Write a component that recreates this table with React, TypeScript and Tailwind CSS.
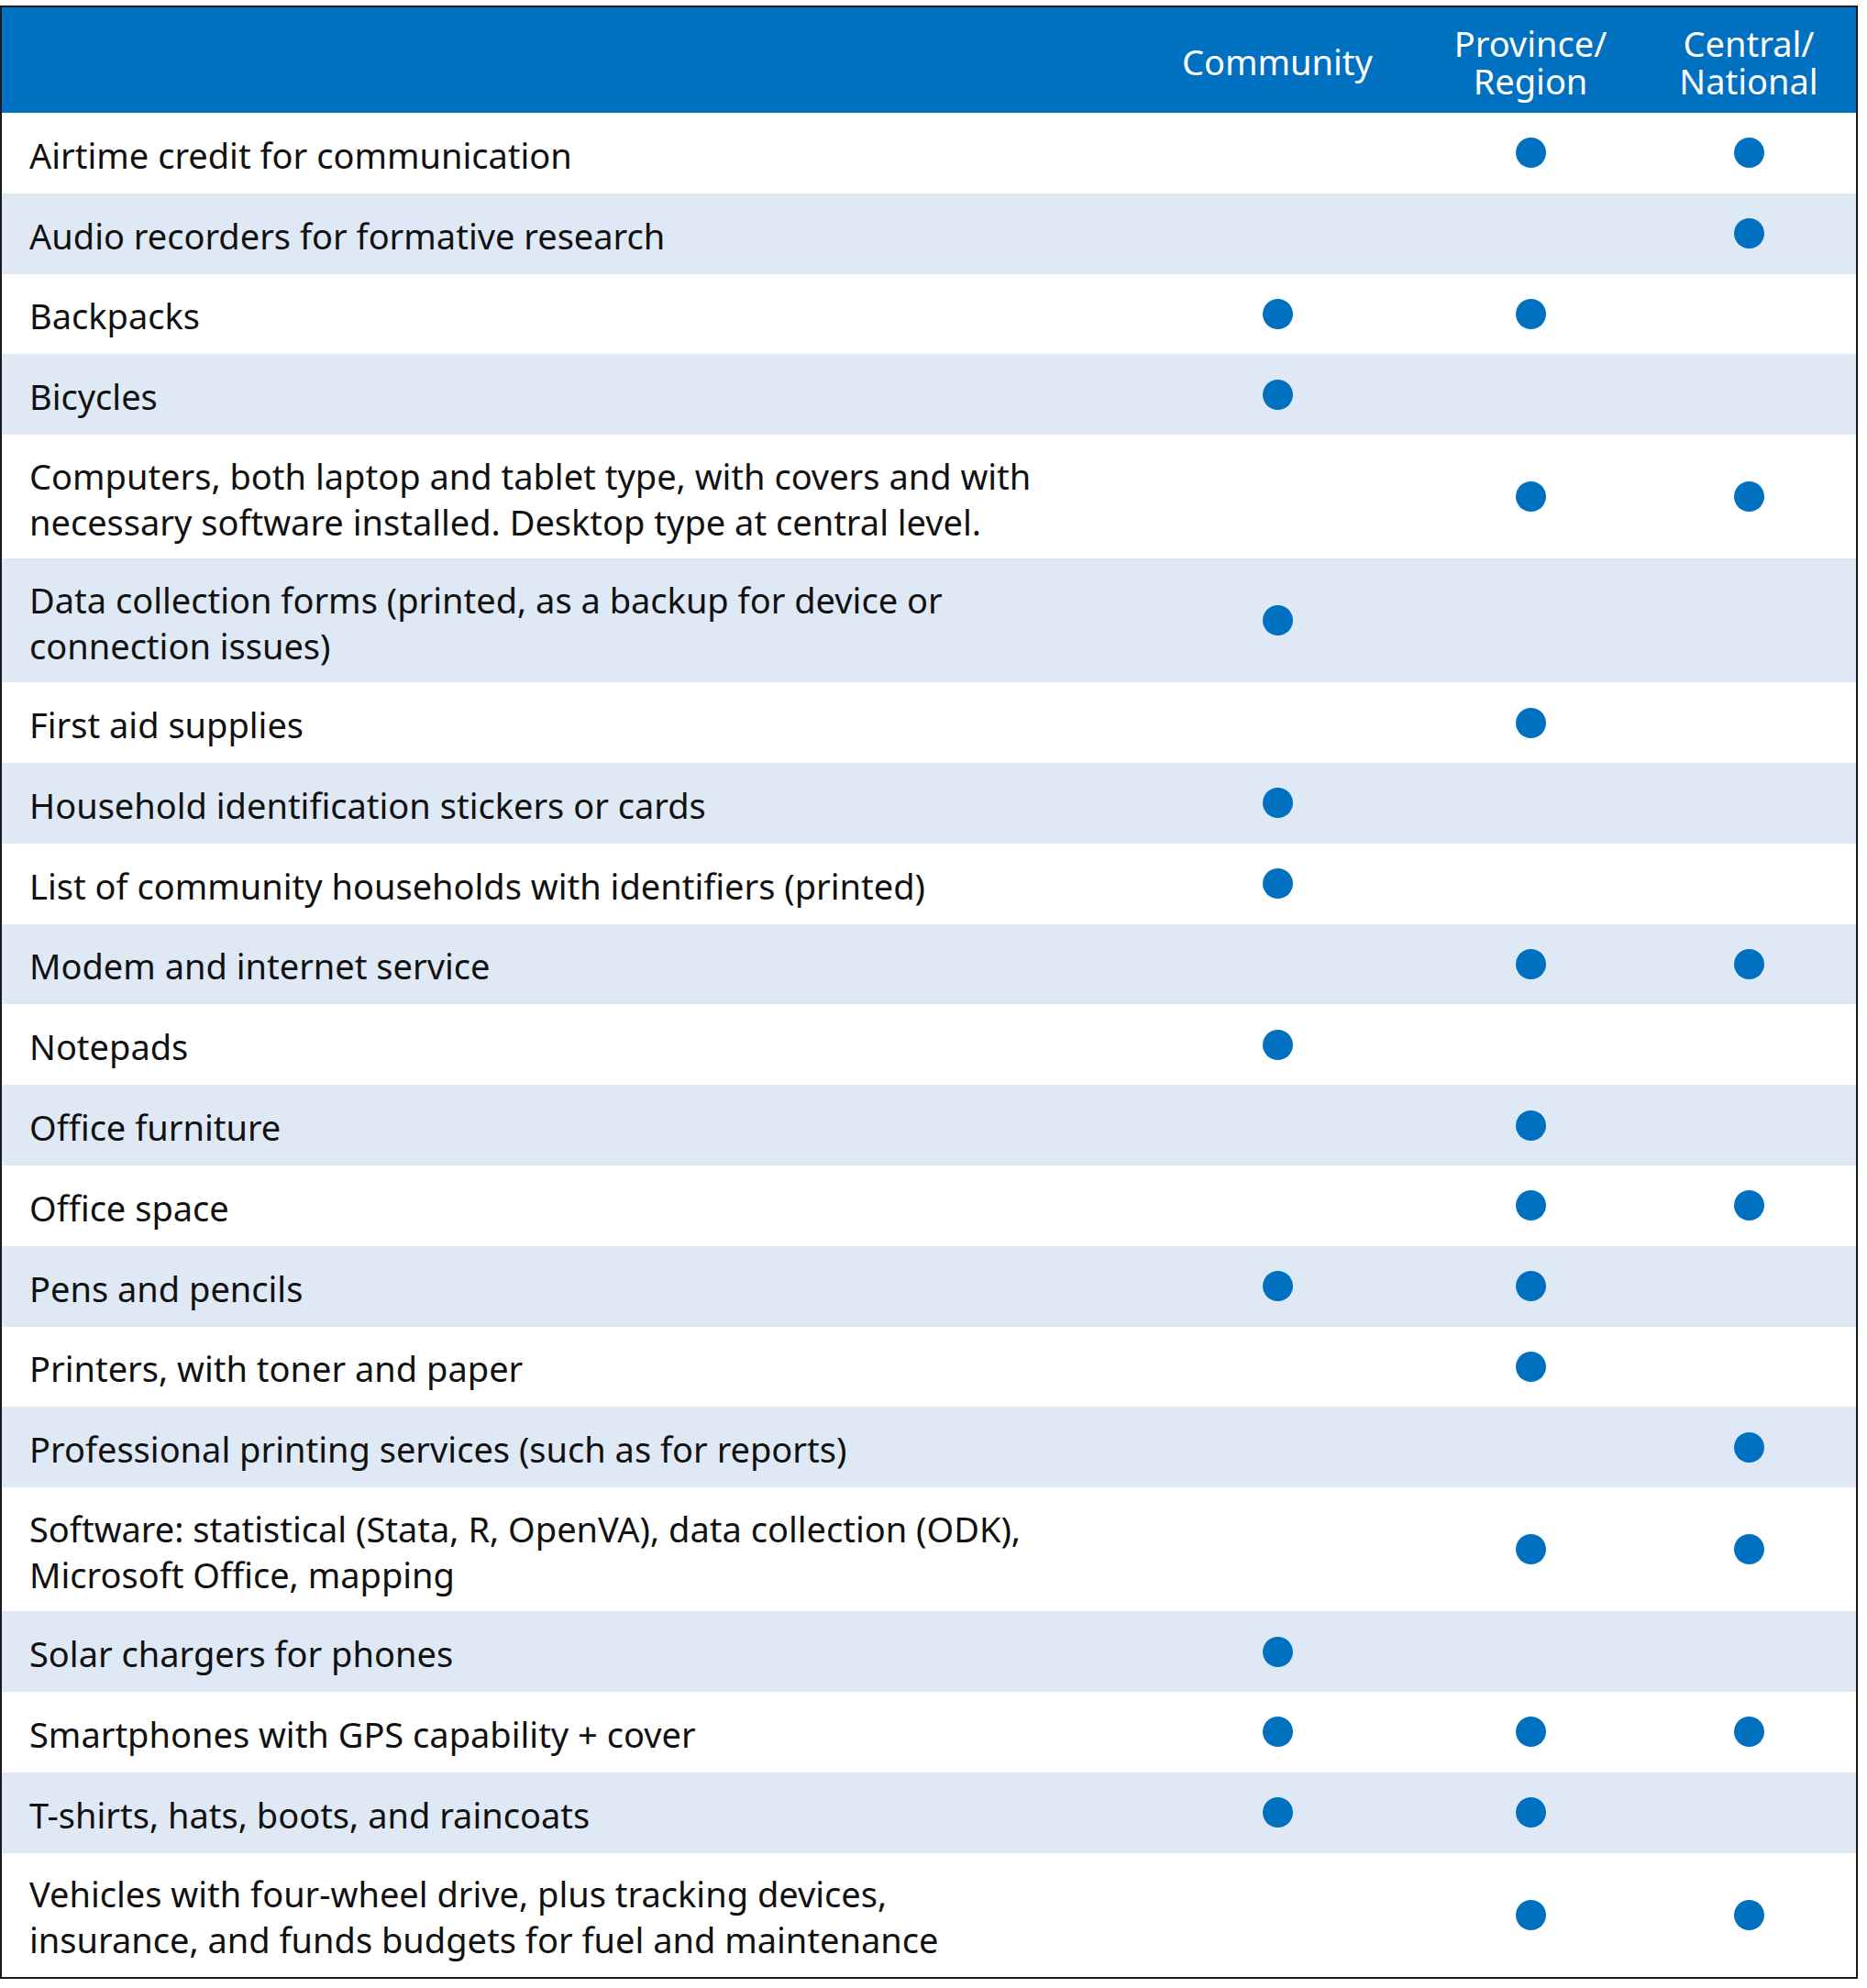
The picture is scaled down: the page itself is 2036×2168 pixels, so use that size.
import React from "react";

type Item = {
  lines: string[];
  community?: boolean;
  province?: boolean;
  central?: boolean;
};

const items: Item[] = [
  { lines: ["Airtime credit for communication"], province: true, central: true },
  { lines: ["Audio recorders for formative research"], central: true },
  { lines: ["Backpacks"], community: true, province: true },
  { lines: ["Bicycles"], community: true },
  {
    lines: [
      "Computers, both laptop and tablet type, with covers and with",
      "necessary software installed. Desktop type at central level.",
    ],
    province: true,
    central: true,
  },
  {
    lines: ["Data collection forms (printed, as a backup for device or", "connection issues)"],
    community: true,
  },
  { lines: ["First aid supplies"], province: true },
  { lines: ["Household identification stickers or cards"], community: true },
  { lines: ["List of community households with identifiers (printed)"], community: true },
  { lines: ["Modem and internet service"], province: true, central: true },
  { lines: ["Notepads"], community: true },
  { lines: ["Office furniture"], province: true },
  { lines: ["Office space"], province: true, central: true },
  { lines: ["Pens and pencils"], community: true, province: true },
  { lines: ["Printers, with toner and paper"], province: true },
  { lines: ["Professional printing services (such as for reports)"], central: true },
  {
    lines: [
      "Software: statistical (Stata, R, OpenVA), data collection (ODK),",
      "Microsoft Office, mapping",
    ],
    province: true,
    central: true,
  },
  { lines: ["Solar chargers for phones"], community: true },
  { lines: ["Smartphones with GPS capability + cover"], community: true, province: true, central: true },
  { lines: ["T-shirts, hats, boots, and raincoats"], community: true, province: true },
  {
    lines: [
      "Vehicles with four-wheel drive, plus tracking devices,",
      "insurance, and funds budgets for fuel and maintenance",
    ],
    province: true,
    central: true,
  },
];

function Dot({ on }: { on?: boolean }) {
  return (
    <div className="flex items-center justify-center">
      {on && <span className="block w-[33px] h-[33px] rounded-full bg-[#0070c0]" />}
    </div>
  );
}

function HeadCell({ lines }: { lines: string[] }) {
  return (
    <div className="flex flex-col items-center justify-center">
      {lines.map((l) => (
        <span key={l} className="block">
          {l}
        </span>
      ))}
    </div>
  );
}

export default function App() {
  return (
    <div className="w-[2036px] bg-white pt-[6px] font-['Noto_Sans',sans-serif] text-[38px] leading-[50px] text-[#111]">
      <div className="w-[2026px] border-2 border-[#1a1a1a]">
        <div className="grid grid-cols-[1fr_230px_322px_154px] pr-[40px] h-[115px] bg-[#0070c0] text-white text-center leading-[41px] pt-[4px]">
          <div />
          <HeadCell lines={["Community"]} />
          <HeadCell lines={["Province/", "Region"]} />
          <HeadCell lines={["Central/", "National"]} />
        </div>
        {items.map((item, i) => (
          <div
            key={i}
            className={`grid grid-cols-[1fr_230px_322px_154px] pr-[40px] ${
              item.lines.length > 1 ? "h-[135px]" : "h-[87.8px]"
            } ${i % 2 === 1 ? "bg-[#dfe8f5]" : "bg-white"}`}
          >
            <div className="flex flex-col justify-center pl-[30px] pt-[4px] whitespace-nowrap">
              {item.lines.map((l, j) => (
                <span key={j}>{l}</span>
              ))}
            </div>
            <Dot on={item.community} />
            <Dot on={item.province} />
            <Dot on={item.central} />
          </div>
        ))}
      </div>
    </div>
  );
}
